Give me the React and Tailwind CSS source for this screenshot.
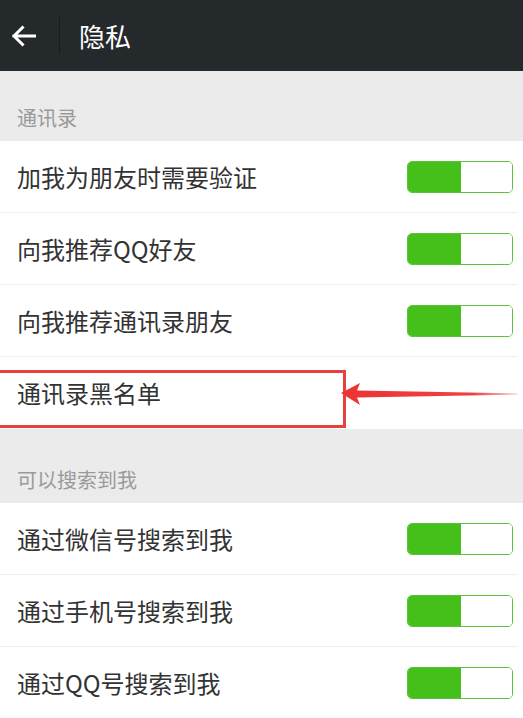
import React from "react";

const font = { fontFamily: '"Noto Sans CJK SC", "Noto Sans", sans-serif' };

function Toggle() {
  return (
    <div className="flex h-[32px] w-[106px] overflow-hidden rounded-[5px] border-[1.5px] border-[#5cc23a] bg-white">
      <div className="h-full w-[53px] bg-[#45c01a]" />
      <div className="h-full flex-1 bg-white" />
    </div>
  );
}

function Row({ label, toggle = true, divider = true }) {
  return (
    <div className="relative flex h-[72px] items-center justify-between bg-white pl-[17px] pr-[10px]">
      <span className="text-[24px] leading-[30px] text-[#333333]">{label}</span>
      {toggle && <Toggle />}
      {divider && <div className="absolute bottom-0 left-0 right-[6px] h-px bg-[#eeeeee]" />}
    </div>
  );
}

export default function App() {
  return (
    <div className="relative h-[718px] w-[523px] overflow-hidden bg-white" style={font}>
      <div className="flex h-[71px] items-center bg-[#24292c]">
        <div className="flex w-[59px] items-center pl-[11px]">
          <svg width="25" height="22" viewBox="0 0 25 22" fill="none">
            <path d="M23.5 11H3M11.5 2.5L3 11l8.5 8.5" stroke="#ffffff" strokeWidth="3" strokeLinecap="square" />
          </svg>
        </div>
        <div className="h-[37px] w-px bg-[#181c1e]" />
        <span className="ml-[19px] text-[26px] leading-[34px] text-white">隐私</span>
      </div>

      <div className="flex h-[70px] items-end bg-[#ebebeb] pb-[9px] pl-[17px]">
        <span className="text-[20px] leading-[28px] text-[#9a9a9a]">通讯录</span>
      </div>
      <Row label="加我为朋友时需要验证" />
      <Row label="向我推荐QQ好友" />
      <Row label="向我推荐通讯录朋友" />
      <Row label="通讯录黑名单" toggle={false} divider={false} />
      <div className="flex h-[74px] items-end bg-[#ebebeb] pb-[9px] pl-[17px]">
        <span className="text-[20px] leading-[28px] text-[#9a9a9a]">可以搜索到我</span>
      </div>
      <Row label="通过微信号搜索到我" />
      <Row label="通过手机号搜索到我" />
      <Row label="通过QQ号搜索到我" divider={false} />

      <div className="absolute left-[-6px] top-[370px] h-[58px] w-[352px] border-[3px] border-[#e6403f]" />
      <svg className="absolute left-[338px] top-[380px]" width="182" height="28" viewBox="0 0 182 28">
        <defs>
          <linearGradient id="tail" x1="0" x2="1" y1="0" y2="0">
            <stop offset="0" stopColor="#ec3434" />
            <stop offset="0.75" stopColor="#ef4040" />
            <stop offset="1" stopColor="#f27070" stopOpacity="0.4" />
          </linearGradient>
        </defs>
        <path d="M3 13L22 3L19 10.5L180 13.5L180 14.5L19 17.5L22 25Z" fill="url(#tail)" />
      </svg>
    </div>
  );
}
